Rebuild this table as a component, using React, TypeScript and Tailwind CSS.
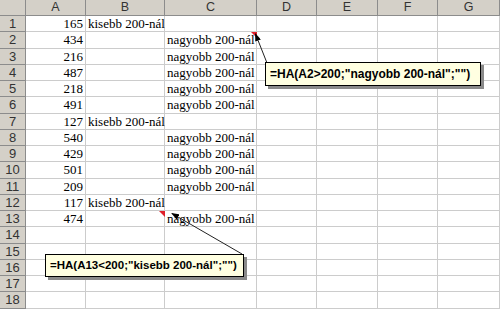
import React from 'react';

const columns = ['A', 'B', 'C', 'D', 'E', 'F', 'G'];

const NAGY = 'nagyobb 200-nál';
const KIS = 'kisebb 200-nál';

// [A, B, C]
const rows: [string, string, string][] = [
  ['165', KIS, ''],
  ['434', '', NAGY],
  ['216', '', NAGY],
  ['487', '', NAGY],
  ['218', '', NAGY],
  ['491', '', NAGY],
  ['127', KIS, ''],
  ['540', '', NAGY],
  ['429', '', NAGY],
  ['501', '', NAGY],
  ['209', '', NAGY],
  ['117', KIS, ''],
  ['474', '', NAGY],
  ['', '', ''],
  ['', '', ''],
  ['', '', ''],
  ['', '', ''],
  ['', '', ''],
];

function Callout({ className, children }: { className: string; children: React.ReactNode }) {
  return (
    <div
      className={`absolute flex items-center bg-[#ffffe1] border border-black pl-[4px] shadow-[3px_3px_0_#8a8a8a] font-['Liberation_Sans',Arial,sans-serif] font-bold text-black whitespace-nowrap ${className}`}
    >
      {children}
    </div>
  );
}

export default function App() {
  return (
    <div className="relative w-[500px] h-[309px] overflow-hidden bg-white">
      <div className="grid grid-cols-[26px_60px_79px_92px_60px_61px_60px_62px] grid-rows-[16px_repeat(18,16.25px)]">
        {/* Corner + column headers */}
        <div className="bg-[#d4d0c8] border-r border-b border-[#8c8c8c]" />
        {columns.map((c) => (
          <div
            key={c}
            className="bg-[#d4d0c8] border-r border-b border-[#8c8c8c] flex items-center justify-center font-['Liberation_Sans',Arial,sans-serif] text-[12.5px] text-[#333] leading-none"
          >
            {c}
          </div>
        ))}

        {rows.map((r, i) => (
          <React.Fragment key={i}>
            <div className="bg-[#d4d0c8] border-r border-b border-[#8c8c8c] flex items-center justify-center font-['Liberation_Sans',Arial,sans-serif] text-[13px] text-[#333] leading-none">
              {i + 1}
            </div>
            <div className="border-r border-b border-[#cccccc] flex items-center justify-end pr-[2px] font-['Liberation_Serif','Times_New_Roman',serif] text-[13px] leading-none text-black">
              {r[0]}
            </div>
            <div className="border-r border-b border-[#cccccc] flex items-center pl-[2px] font-['Liberation_Serif','Times_New_Roman',serif] text-[13px] leading-none text-black whitespace-nowrap">
              {r[1]}
            </div>
            <div className="border-r border-b border-[#cccccc] flex items-center pl-[2px] font-['Liberation_Serif','Times_New_Roman',serif] text-[13px] leading-none text-black whitespace-nowrap">
              {r[2]}
            </div>
            {[0, 1, 2, 3].map((k) => (
              <div key={k} className="border-r border-b border-[#cccccc]" />
            ))}
          </React.Fragment>
        ))}
      </div>

      {/* comment indicators */}
      <div className="absolute left-[251px] top-[32px] w-0 h-0 border-l-[6px] border-l-transparent border-t-[6px] border-t-[#e0202a]" />
      <div className="absolute left-[159px] top-[211px] w-0 h-0 border-l-[6px] border-l-transparent border-t-[6px] border-t-[#e0202a]" />

      {/* arrows */}
      <svg className="absolute inset-0 pointer-events-none" width="500" height="309">
        <defs>
          <marker id="head" markerWidth="8" markerHeight="6" refX="7" refY="3" orient="auto" markerUnits="userSpaceOnUse">
            <path d="M0,0 L8,3 L0,6 Z" fill="#000" />
          </marker>
        </defs>
        <line x1="267" y1="63" x2="255.5" y2="34" stroke="#222" strokeWidth="1" markerEnd="url(#head)" />
        <line x1="242" y1="254" x2="172" y2="213.5" stroke="#222" strokeWidth="1" markerEnd="url(#head)" />
      </svg>

      <Callout className="left-[265px] top-[62px] w-[216px] h-[24px] text-[12px]">=HA(A2&gt;200;"nagyobb 200-nál";"")</Callout>
      <Callout className="left-[45px] top-[254px] w-[199px] h-[23px] text-[11.5px]">=HA(A13&lt;200;"kisebb 200-nál";"")</Callout>
    </div>
  );
}
